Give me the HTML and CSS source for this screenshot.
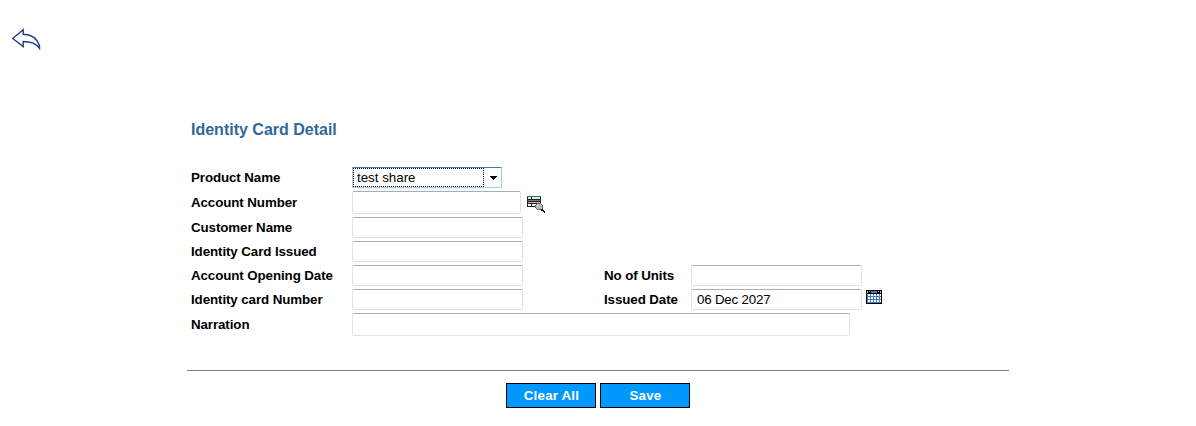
FILE: index.html
```html
<!DOCTYPE html>
<html lang="en">
<head>
<meta charset="utf-8">
<title>Identity Card Detail</title>
<link rel="stylesheet" href="styles.css">
</head>
<body>
<header class="topbar">
  <svg class="back" width="30" height="22" viewBox="0 0 30 22"><path d="M.7 10.500 11.200 1.700V6.300C19 6.500 25 10.500 27.500 17.500V20.300C24 15 19 13.500 11.200 13.500V18.500Z" fill="#fff" stroke="#1c3c86" stroke-width="1.4"/></svg>
</header>
<main class="panel">
  <h1 class="title">Identity Card Detail</h1>
  <form class="form">
    <div class="row"><label class="label">Product Name</label><div class="select"><span class="value">test share</span><svg class="caret" width="7" height="4" viewBox="0 0 7 4" shape-rendering="crispEdges"><path d="M0 0h7v1H6v1H5v1H4v1H3V3H2V2H1V1H0z"/></svg></div></div>
    <div class="row tall"><label class="label">Account Number</label><div class="field account"></div>
      <svg class="lookup" width="18" height="17" viewBox="0 0 18 17" shape-rendering="crispEdges"><path fill="#222" d="M0 0h14v11H0z"/><path fill="#008080" d="M0 0h14v1H0z"/><path fill="#e4e4e4" d="M1 1h3v2H1zM5 1h8v2H5z"/><path fill="#777" d="M1 4h12v1H1z"/><path fill="#bbb" d="M1 6h12v1H1z"/><path fill="#fff" d="M1 8h3v2H1zM5 8h5v2H5z"/><path fill="#666" d="M10 7h4v1h1v1h1v4h-1v1h-5v-1H9v-1H8V9h1V8h1z"/><path fill="#bbb" d="M10 8h4v1h1v4h-5v-1H9V9h1z"/><path fill="#ddd" d="M10 9h2v1h-2z"/><path fill="#111" d="M14 13h2v1h1v1h1v2h-1v-1h-1v-1h-2z"/></svg>
    </div>
    <div class="row"><label class="label">Customer Name</label><div class="field"></div></div>
    <div class="row"><label class="label">Identity Card Issued</label><div class="field"></div></div>
    <div class="row"><label class="label">Account Opening Date</label><div class="field"></div><label class="label second">No of Units</label><div class="field"></div></div>
    <div class="row"><label class="label">Identity card Number</label><div class="field"></div><label class="label second">Issued Date</label><div class="field">06 Dec 2027</div>
      <svg class="calendar" width="16" height="14" viewBox="0 0 16 14" shape-rendering="crispEdges"><path d="M0 0h16v14H0z"/><path fill="#3f7fc1" d="M1 4h14v9H1zM5 1h6v2H5z"/><path fill="#9cc0e4" d="M1 1h1v2H1zM3 1h1v1H3zM12 1h1v1h-1zM14 1h1v2h-1z"/><path stroke="#fff" stroke-width="2" stroke-dasharray="2 1" d="M2 5h13M2 8h13M2 11h13"/></svg>
    </div>
    <div class="row tall"><label class="label">Narration</label><div class="field wide"></div></div>
  </form>
  <div class="actions"><button class="button">Clear All</button><button class="button">Save</button></div>
</main>
</body>
</html>
```
FILE: styles.css
```css
* { box-sizing: border-box; }
body { margin: 0; background: #fff; color: #000; font-family: "Liberation Sans", Arial, sans-serif; }
.topbar { height: 110px; padding: 28px 0 0 12px; }
.back { display: block; }
.panel { width: 822px; margin-left: 187px; }
.title { margin: 0; padding-left: 4px; height: 57px; color: #369; font-size: 16px; line-height: 40px; font-weight: bold; }
.form { display: flex; flex-direction: column; gap: 3px; height: 204px; padding-left: 4px; border-bottom: 1px solid gray; }
.row { display: flex; align-items: center; height: 21px; }
.tall { height: 23px; }
.label { width: 161px; font-size: 13.333px; font-weight: bold; letter-spacing: -.09px; white-space: nowrap; }
.second { width: 87px; margin-left: 81px; }
.field { width: 171px; height: 100%; padding-left: 5px; border: 1px solid #e2e3ea; border-top-color: #abadb3; border-radius: 2px; font-size: 13.333px; line-height: 19px; letter-spacing: -.2px; }
.account { width: 169px; }
.wide { width: 498px; }
.select { display: flex; align-items: center; width: 150px; height: 21px; border: 1px solid #a5cce6; border-top-color: #3d7bad; border-radius: 1px; font-size: 13.333px; }
.value { width: 131px; height: 19px; padding-left: 3px; border: 1px dotted #000; line-height: 17px; }
.caret { margin-left: 6px; }
.lookup { align-self: flex-start; margin: 5px 0 0 6px; }
.calendar { align-self: flex-start; margin: 1px 0 0 4px; }
.actions { display: flex; gap: 4px; padding: 12px 0 0 319px; }
.button { width: 90px; height: 25px; padding: 0 0 1px 1px; border: 1px solid #000; border-radius: 0; background: #09f; color: #fff; font: bold 13.333px "Liberation Sans", Arial, sans-serif; letter-spacing: .2px; }
```
